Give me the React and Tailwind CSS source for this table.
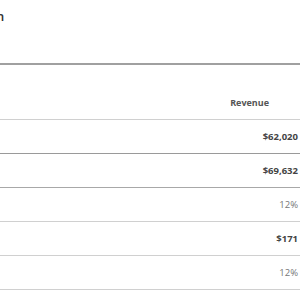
export default function App() {
  const rows = [
    { v: "$62,020", bold: true, line: "border-[#9a9a9a]" },
    { v: "$69,632", bold: true, line: "border-[#a8a8a8]" },
    { v: "12%", bold: false, line: "border-[#d0d0d0]" },
    { v: "$171", bold: true, line: "border-[#d0d0d0]" },
    { v: "12%", bold: false, line: "border-[#d0d0d0]" },
  ];
  return (
    <div className="w-[300px] h-[300px] overflow-hidden bg-white" style={{ fontFamily: '"Open Sans", sans-serif' }}>
      <div className="h-[63px] pt-[8px] overflow-hidden">
        <div className="text-[13px] font-semibold text-[#333] ml-[-4px] leading-[16px] whitespace-nowrap">n</div>
      </div>
      <div className="border-t-2 border-[#a0a0a0]" />
      <div className="h-[55px] flex items-end justify-end pr-[31px] pb-[9px] border-b border-[#d0d0d0]">
        <span className="text-[9px] font-bold text-[#555] leading-[14px]">Revenue</span>
      </div>
      {rows.map((r, i) => (
        <div key={i} className={`h-[34px] flex items-center justify-end pr-[2px] border-b ${r.line}`}>
          <span className={`text-[9.5px] leading-[14px] ${r.bold ? "font-bold text-[#444]" : "text-[#777]"}`}>{r.v}</span>
        </div>
      ))}
    </div>
  );
}
